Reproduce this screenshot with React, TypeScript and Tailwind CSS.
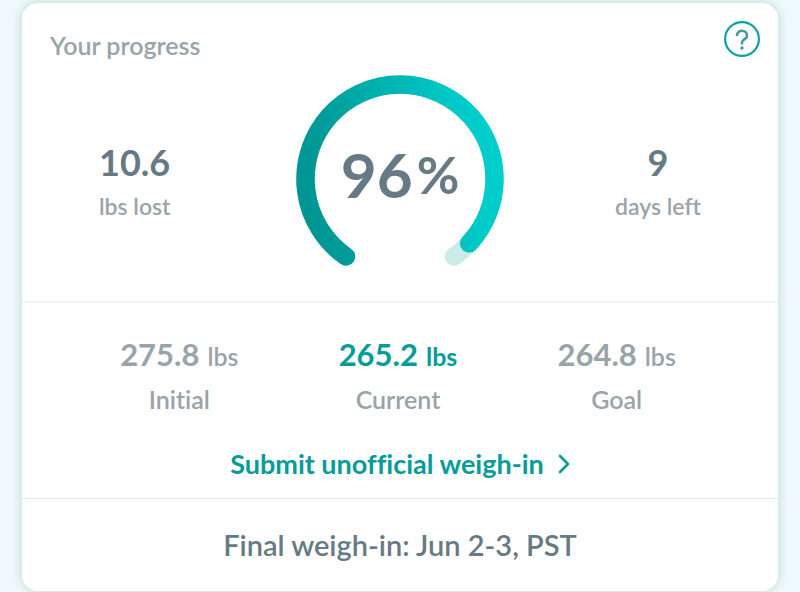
import type { ReactNode } from 'react';

// ============================================
// Types
// ============================================

interface StatProps {
  value: string;
  label: string;
  className?: string;
}

interface WeightProps {
  value: string;
  label: string;
  highlighted?: boolean;
}

interface GaugeProps {
  percent: number;
  children: ReactNode;
}

// ============================================
// Constants
// ============================================

const WEIGHTS: WeightProps[] = [
  { value: '275.8', label: 'Initial' },
  { value: '265.2', label: 'Current', highlighted: true },
  { value: '264.8', label: 'Goal' },
];

const ARC_PATH = 'M50 181.5 A94.5 94.5 0 1 1 158 181.5';

// ============================================
// Components
// ============================================

function Stat({ value, label, className = '' }: StatProps) {
  return (
    <div className={`flex flex-col ${className}`}>
      <span className="text-4xl leading-10 font-bold text-[#667a85]">{value}</span>
      <span className="mt-2 text-[23px] leading-8 font-semibold text-[#98a4ab]">{label}</span>
    </div>
  );
}

function Gauge({ percent, children }: GaugeProps) {
  return (
    <div className="relative">
      <svg viewBox="0 0 208 192" className="block h-[192px] w-[208px]" fill="none" aria-hidden="true">
        <defs>
          <linearGradient id="gauge" x1="0" y1="130" x2="208" y2="90" gradientUnits="userSpaceOnUse">
            <stop offset="0" stopColor="#009391" />
            <stop offset="0.2" stopColor="#009c99" />
            <stop offset="0.85" stopColor="#00cbc9" />
            <stop offset="1" stopColor="#00cfcd" />
          </linearGradient>
        </defs>
        <path d={ARC_PATH} stroke="#cbebea" strokeWidth="18.5" strokeLinecap="round" />
        <path
          d={ARC_PATH}
          stroke="url(#gauge)"
          strokeWidth="18.5"
          strokeLinecap="round"
          pathLength={100}
          strokeDasharray={`${percent} 200`}
        />
      </svg>
      <div className="absolute inset-x-0 top-[62px] flex items-start justify-center text-[#667a85]">
        {children}
      </div>
    </div>
  );
}

function Weight({ value, label, highlighted = false }: WeightProps) {
  return (
    <div className="flex flex-col items-center">
      <span
        className={`flex items-baseline gap-2 ${highlighted ? 'text-[#079c99]' : 'text-[#98a4ab]'}`}
      >
        <span className="text-[31px] leading-10 font-bold">{value}</span>
        <span className={`text-[25px] ${highlighted ? 'font-bold' : 'font-semibold'}`}>lbs</span>
      </span>
      <span className="mt-[7px] text-[25px] leading-8 font-semibold text-[#98a4ab]">{label}</span>
    </div>
  );
}

export default function App() {
  return (
    <main className="bg-[#effafc] px-[22px] pt-[3px] pb-px font-['Lato','Liberation_Sans',sans-serif] [font-variant-ligatures:none]">
      <section className="rounded-2xl bg-white shadow-[0_0_12px_1px_rgba(90,120,115,0.26)]">
        <header className="flex items-start justify-between pt-[18px] pr-[18px] pl-7">
          <h1 className="pt-2 text-[25px] leading-8 font-semibold text-[#98a4ab]">Your progress</h1>
          <button type="button" aria-label="Help" className="cursor-pointer">
            <svg viewBox="0 0 36 36" className="block size-9" fill="none" strokeWidth="2.2">
              <circle cx="18" cy="18" r="16.9" stroke="#0ba3a0" />
              <path
                d="M13 15 V14.4 C13 8.2 23 8.2 23 14.6 C23 18.8 18 18 18 21.4 V23.4"
                stroke="#429c9a"
                strokeWidth="2.6"
              />
              <circle cx="18" cy="27" r="1.7" fill="#429c9a" />
            </svg>
          </button>
        </header>

        <div className="mt-3.5 grid grid-cols-[1fr_auto_1fr] items-start px-[77px] pb-[34px]">
          <Stat value="10.6" label="lbs lost" className="mt-[67px] items-start justify-self-start" />
          <Gauge percent={95.8}>
            <span className="text-[62px] leading-[74px] font-bold">96</span>
            <span className="ml-1 text-[52px] leading-[74px] font-bold">%</span>
          </Gauge>
          <Stat value="9" label="days left" className="mt-[67px] items-center justify-self-end" />
        </div>

        <div className="border-t-2 border-[#f2f5f5] pt-[31px] pb-4">
          <div className="grid grid-cols-3 pr-[52px] pl-12">
            {WEIGHTS.map((weight) => (
              <Weight key={weight.label} {...weight} />
            ))}
          </div>
          <a href="#weigh-in" className="mt-[31px] flex items-center justify-center gap-3.5 text-[#079c99]">
            <span className="text-[27px] leading-9 font-bold">Submit unofficial weigh-in</span>
            <svg viewBox="0 0 12 20" className="h-5 w-3" fill="none" aria-hidden="true">
              <path
                d="M2 2 L10 10 L2 18"
                stroke="currentColor"
                strokeWidth="2.6"
                strokeLinecap="round"
                strokeLinejoin="round"
              />
            </svg>
          </a>
        </div>

        <footer className="border-t border-[#e4eaec] pt-7 pb-7 text-center text-[29px] leading-9 font-semibold text-[#667a85]">
          Final weigh-in: Jun 2-3, PST
        </footer>
      </section>
    </main>
  );
}
